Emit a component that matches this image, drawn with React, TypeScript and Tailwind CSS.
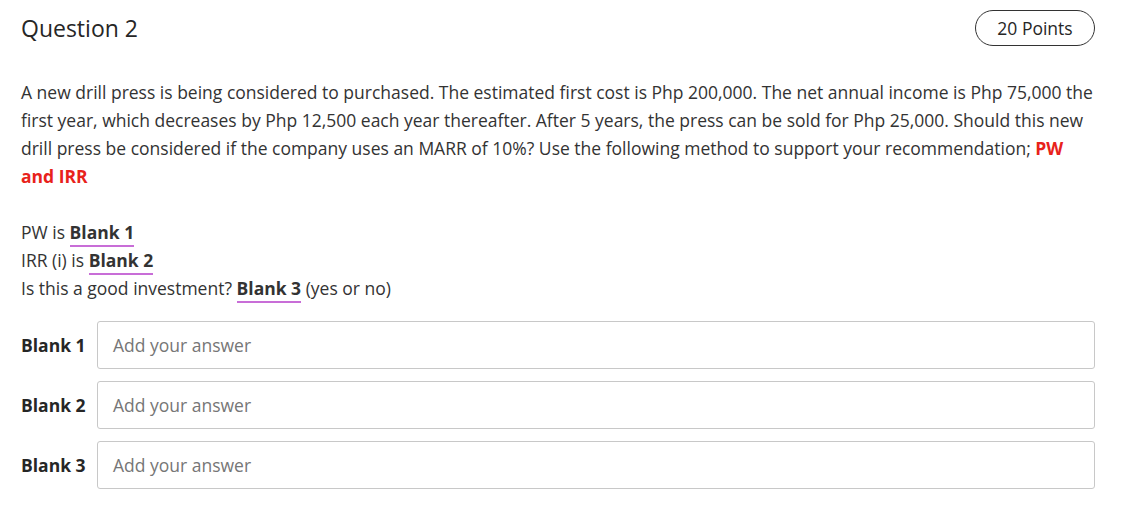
import React from "react";

const font = { fontFamily: '"Open Sans", "Noto Sans", sans-serif' };

function BlankRef({ n }: { n: number }) {
  return (
    <span className="font-bold border-b-2 border-[#c86dd7] pb-[1px]">Blank {n}</span>
  );
}

export default function App() {
  return (
    <div className="w-[1128px] h-[511px] bg-white text-[#333] font-['Open_Sans',sans-serif]" style={font}>
      <div className="pl-[21px] pr-[33px] pt-[10px]">
        <div className="flex items-center justify-between h-[36px]">
          <h1 className="text-[23px] leading-[36px] text-[#262626]">Question 2</h1>
          <div className="h-[36px] w-[120px] rounded-full border border-[#333] flex items-center justify-center text-[17.5px] text-[#262626]">
            20 Points
          </div>
        </div>
        <p className="mt-[32px] text-[17.5px] leading-[28px] text-[#333]">
          A new drill press is being considered to purchased. The estimated first cost is Php 200,000. The net annual income is Php 75,000 the first year, which decreases by Php 12,500 each year thereafter. After 5 years, the press can be sold for Php 25,000. Should this new drill press be considered if the company uses an MARR of 10%? Use the following method to support your recommendation;{" "}
          <span className="font-bold text-[#e8221b]">PW and IRR</span>
        </p>
        <div className="mt-[28px] text-[17.5px] leading-[28px] text-[#333]">
          <div>PW is <BlankRef n={1} /></div>
          <div>IRR (i) is <BlankRef n={2} /></div>
          <div>Is this a good investment? <BlankRef n={3} /> (yes or no)</div>
        </div>
        <div className="mt-[19px] flex flex-col gap-[12px]">
          {[1, 2, 3].map((n) => (
            <div key={n} className="flex items-center">
              <div className="w-[76px] text-[17.5px] font-bold text-[#262626]">Blank {n}</div>
              <div className="flex-1 h-[48px] border border-[#c8c8c8] rounded-[3px] flex items-center px-[15px] text-[17.5px] text-[#767676]">
                Add your answer
              </div>
            </div>
          ))}
        </div>
      </div>
    </div>
  );
}
